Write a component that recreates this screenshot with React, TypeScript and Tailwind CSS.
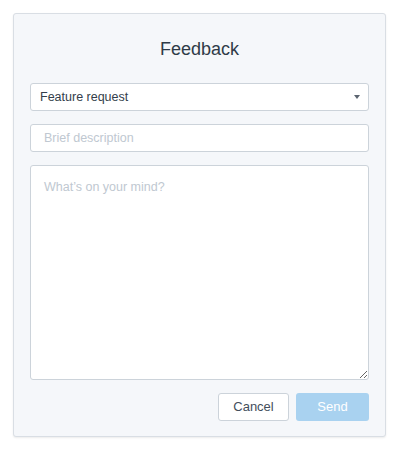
import React, { useState } from 'react';

export default function App() {
  const [type, setType] = useState('Feature request');
  const [title, setTitle] = useState('');
  const [body, setBody] = useState('');

  return (
    <div className="w-[400px] h-[453px] bg-white pt-[13px] pl-[13px] font-['Liberation_Sans',Arial,sans-serif]">
      {/* CARD */}
      <div className="w-[373px] h-[424px] bg-[#f5f7fa] border border-[#d9dee4] rounded-[3px] shadow-[0_1px_2px_rgba(0,0,0,0.08)] pt-[23px] px-[16px] flex flex-col">
        <h1 className="h-[24px] leading-[24px] text-center text-[18px] text-[#2f3b48]">Feedback</h1>

        {/* TIPO */}
        <div className="relative mt-[22px] h-[28px]">
          <select
            value={type}
            onChange={(e) => setType(e.target.value)}
            className="appearance-none w-full h-full bg-white border border-[#ccd3da] rounded-[3px] pl-[9px] text-[12.5px] text-[#333e4b] outline-none"
          >
            <option>Feature request</option>
            <option>Bug report</option>
            <option>Question</option>
          </select>
          <span className="absolute right-[9px] top-[12px] w-0 h-0 border-l-[3px] border-r-[3px] border-t-[4px] border-l-transparent border-r-transparent border-t-[#5b6470] pointer-events-none" />
        </div>

        {/* TITULO */}
        <input
          value={title}
          onChange={(e) => setTitle(e.target.value)}
          placeholder="Brief description"
          className="mt-[13px] h-[28px] w-full bg-white border border-[#ccd3da] rounded-[3px] px-[13px] text-[12.5px] text-[#333e4b] placeholder:text-[#c0c8d1] outline-none"
        />

        {/* MENSAJE */}
        <textarea
          value={body}
          onChange={(e) => setBody(e.target.value)}
          placeholder="What’s on your mind?"
          className="mt-[13px] h-[215px] w-full bg-white border border-[#ccd3da] rounded-[3px] px-[13px] pt-[13px] pb-[12px] text-[12.5px] leading-[16px] text-[#333e4b] placeholder:text-[#c0c8d1] outline-none"
        />

        {/* ACCIONES */}
        <div className="mt-[13px] flex justify-end gap-[7px]">
          <button className="w-[71px] h-[28px] bg-white border border-[#ccd3da] rounded-[3px] text-[13px] text-[#434e5b]">
            Cancel
          </button>
          <button disabled className="w-[73px] h-[28px] bg-[#a9d2f0] rounded-[3px] text-[13px] text-white">
            Send
          </button>
        </div>
      </div>
    </div>
  );
}
